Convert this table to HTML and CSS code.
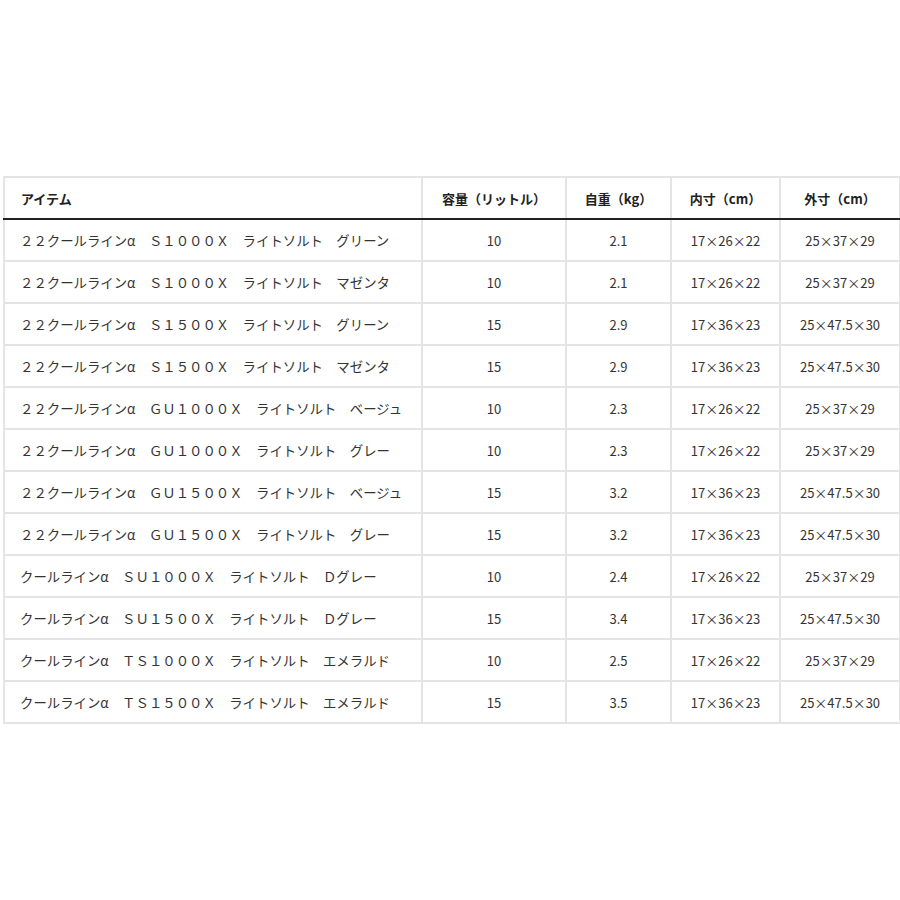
FILE: index.html
```html
<!DOCTYPE html>
<html lang="ja">
<head>
<meta charset="utf-8">
<link rel="stylesheet" href="styles.css">
</head>
<body>
<div class="wrap">
<table class="spec">
<colgroup>
<col class="c1"><col class="c2"><col class="c3"><col class="c4"><col class="c5">
</colgroup>
<thead>
<tr><th class="left">アイテム</th><th>容量（リットル）</th><th>自重（kg）</th><th>内寸（cm）</th><th>外寸（cm）</th></tr>
</thead>
<tbody>
<tr><td class="item">２２クールラインα　Ｓ１０００Ｘ　ライトソルト　グリーン</td><td>10</td><td>2.1</td><td>17×26×22</td><td>25×37×29</td></tr>
<tr><td class="item">２２クールラインα　Ｓ１０００Ｘ　ライトソルト　マゼンタ</td><td>10</td><td>2.1</td><td>17×26×22</td><td>25×37×29</td></tr>
<tr><td class="item">２２クールラインα　Ｓ１５００Ｘ　ライトソルト　グリーン</td><td>15</td><td>2.9</td><td>17×36×23</td><td>25×47.5×30</td></tr>
<tr><td class="item">２２クールラインα　Ｓ１５００Ｘ　ライトソルト　マゼンタ</td><td>15</td><td>2.9</td><td>17×36×23</td><td>25×47.5×30</td></tr>
<tr><td class="item">２２クールラインα　ＧＵ１０００Ｘ　ライトソルト　ベージュ</td><td>10</td><td>2.3</td><td>17×26×22</td><td>25×37×29</td></tr>
<tr><td class="item">２２クールラインα　ＧＵ１０００Ｘ　ライトソルト　グレー</td><td>10</td><td>2.3</td><td>17×26×22</td><td>25×37×29</td></tr>
<tr><td class="item">２２クールラインα　ＧＵ１５００Ｘ　ライトソルト　ベージュ</td><td>15</td><td>3.2</td><td>17×36×23</td><td>25×47.5×30</td></tr>
<tr><td class="item">２２クールラインα　ＧＵ１５００Ｘ　ライトソルト　グレー</td><td>15</td><td>3.2</td><td>17×36×23</td><td>25×47.5×30</td></tr>
<tr><td class="item">クールラインα　ＳＵ１０００Ｘ　ライトソルト　Ｄグレー</td><td>10</td><td>2.4</td><td>17×26×22</td><td>25×37×29</td></tr>
<tr><td class="item">クールラインα　ＳＵ１５００Ｘ　ライトソルト　Ｄグレー</td><td>15</td><td>3.4</td><td>17×36×23</td><td>25×47.5×30</td></tr>
<tr><td class="item">クールラインα　ＴＳ１０００Ｘ　ライトソルト　エメラルド</td><td>10</td><td>2.5</td><td>17×26×22</td><td>25×37×29</td></tr>
<tr><td class="item">クールラインα　ＴＳ１５００Ｘ　ライトソルト　エメラルド</td><td>15</td><td>3.5</td><td>17×36×23</td><td>25×47.5×30</td></tr>
</tbody>
</table>
</div>
</body>
</html>
```
FILE: styles.css
```css
html, body {
  margin: 0;
  padding: 0;
  background: #fff;
}
.wrap {
  padding: 176px 2px 0 3px;
}
.spec {
  width: 896px;
  border-collapse: collapse;
  table-layout: fixed;
  font-family: "Noto Sans CJK JP", "Noto Sans", sans-serif;
  color: #333;
  border: 2px solid #e4e4e4;
}
.c1 { width: 418px; }
.c2 { width: 144px; }
.c3 { width: 105px; }
.c4 { width: 109px; }
.c5 { width: 120px; }
.spec th {
  height: 40px;
  font-size: 13px;
  font-weight: 700;
  color: #222;
  text-align: center;
  border: 2px solid #e4e4e4;
  border-bottom: 2px solid #222;
  padding: 0 8px;
}
.spec th.left {
  text-align: left;
  padding-left: 16px;
}
.spec td {
  height: 40px;
  font-size: 13px;
  text-align: center;
  border: 2px solid #e4e4e4;
  padding: 0 6px;
  white-space: nowrap;
}
.spec td.item {
  text-align: left;
  padding-left: 15px;
  font-size: 13.4px;
  font-family: "Noto Sans CJK JP", sans-serif;
  color: #333;
}
```
